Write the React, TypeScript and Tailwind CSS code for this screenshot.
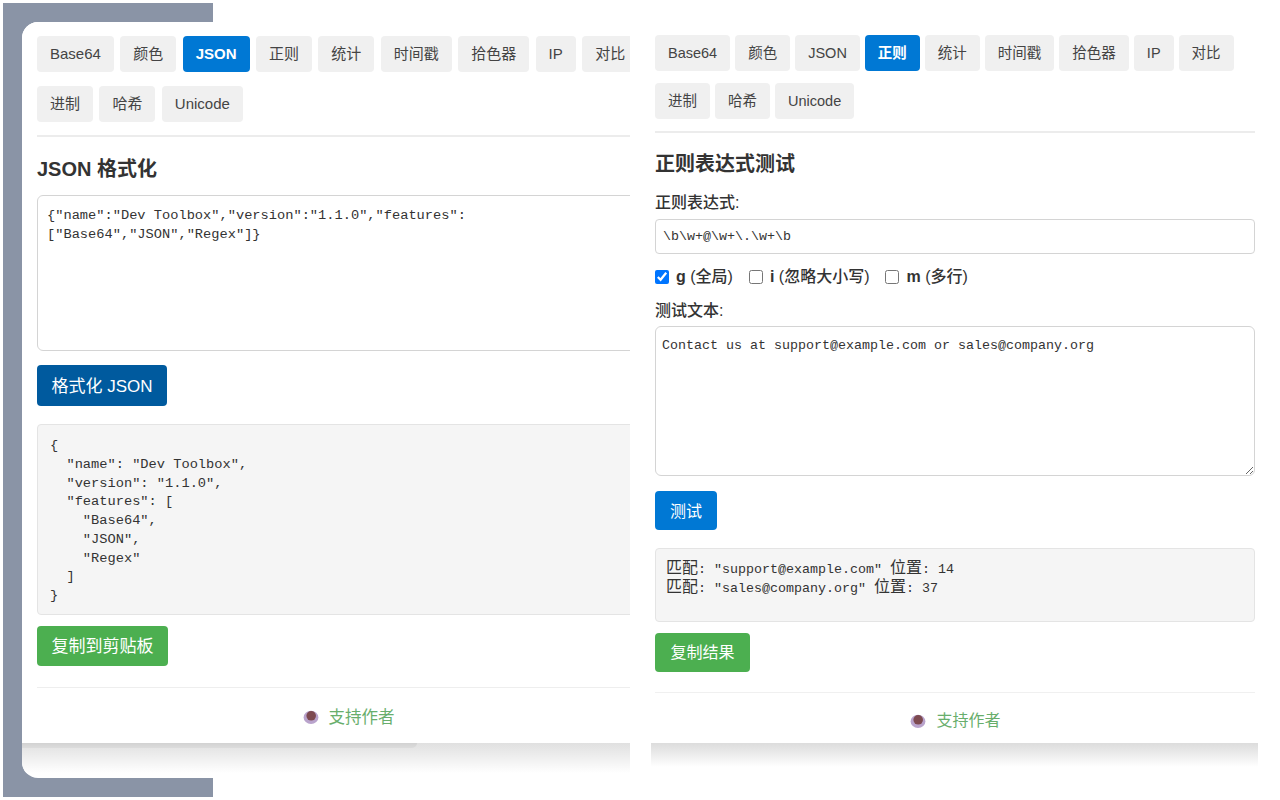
import { useState } from "react";

const TABS = ["Base64", "颜色", "JSON", "正则", "统计", "时间戳", "拾色器", "IP", "对比", "进制", "哈希", "Unicode"];
const SANS = "font-['Liberation_Sans','Noto_Sans_CJK_SC',sans-serif]";
const MONO = "font-['Liberation_Mono','Noto_Sans_CJK_SC',monospace]";

const JSON_INPUT = '{"name":"Dev Toolbox","version":"1.1.0","features":\n["Base64","JSON","Regex"]}';
const JSON_OUTPUT = `{
  "name": "Dev Toolbox",
  "version": "1.1.0",
  "features": [
    "Base64",
    "JSON",
    "Regex"
  ]
}`;

const CoffeeIcon = () => (
  <svg width="16" height="16" viewBox="0 0 16 16" className="shrink-0">
    <ellipse cx="8" cy="8.4" rx="7.4" ry="6.6" fill="#b9a3cc" />
    <circle cx="8.2" cy="6.8" r="4.8" fill="#7d4a50" />
  </svg>
);

const TabBar = ({ active, large }: { active: string; large: boolean }) => (
  <div className={large ? "flex w-[610px] flex-wrap gap-x-[6.4px] gap-y-[14px]" : "flex w-[600px] flex-wrap gap-x-[5px] gap-y-3"}>
    {TABS.map((tab) => (
      <button
        key={tab}
        className={`h-[36px] rounded-[4px] px-[13px] pt-[1px] ${large ? "text-[15px]" : "text-[14.5px]"} ${
          tab === active ? "bg-[#0078d4] font-bold text-white" : "bg-[#f0f0f0] text-[#444]"
        }`}
      >
        {tab}
      </button>
    ))}
  </div>
);

const Support = ({ className }: { className: string }) => (
  <div className={`flex items-center justify-center gap-[10px] text-[#68ae6c] ${className}`}>
    <CoffeeIcon />
    支持作者
  </div>
);

const JsonPanel = () => (
  <div className="relative h-[756px] w-[608px] overflow-hidden rounded-l-[16px] bg-white">
    <div className="h-[721px] bg-white pl-[15px] pt-[14px]">
      <TabBar active="JSON" large />
      <div className="mt-[13px] h-[2px] w-[610px] bg-[#ececec]" />
      <h2 className="mt-[18px] text-[20px] font-bold leading-[28px] text-[#333]">JSON 格式化</h2>
      <textarea
        readOnly
        value={JSON_INPUT}
        className={`mt-[12px] block h-[156px] w-[620px] resize-none rounded-[6px] border border-[#d4d4d4] py-[10px] pl-[9px] pr-[10px] text-[13.7px] leading-[19px] text-[#333] outline-none ${MONO}`}
      />
      <button className="mt-[14px] block h-[41px] w-[130px] rounded-[4px] bg-[#005a9e] pt-[3px] text-[17px] text-white">格式化 JSON</button>
      <pre className={`mt-[18px] h-[191px] w-[620px] rounded-[4px] border border-[#e4e4e4] bg-[#f5f5f5] px-[12px] pt-[12px] text-[13.7px] leading-[18.75px] text-[#333] ${MONO}`}>
        {JSON_OUTPUT}
      </pre>
      <button className="mt-[11px] block h-[40px] w-[131px] rounded-[4px] bg-[#4caf50] pt-[2px] text-[17px] text-white">复制到剪贴板</button>
      <div className="mt-[21px] h-px w-[610px] bg-[#eee]" />
      <Support className="mt-[18px] pl-[30px] text-[16.5px] leading-[22px]" />
    </div>
    <div className="h-[30px] bg-gradient-to-b from-[#e0e0e0] to-white">
      <div className="h-[5px] w-[395px] rounded-br-[16px] bg-gradient-to-b from-[#d2d2d2] to-[#dcdcdc]" />
    </div>
  </div>
);

const RegexPanel = () => {
  const [flags, setFlags] = useState({ g: true, i: false, m: false });
  const options: [keyof typeof flags, string][] = [
    ["g", "(全局)"],
    ["i", "(忽略大小写)"],
    ["m", "(多行)"],
  ];

  return (
    <div className="ml-[21px] w-[607px] pt-[32px]">
      <div className="h-[708px] pl-[4px]">
        <TabBar active="正则" large={false} />
        <div className="mt-[12px] h-[2px] w-[600px] bg-[#ececec]" />
        <h2 className="mt-[17px] text-[20px] font-bold leading-[28px] text-[#333]">正则表达式测试</h2>
        <label className="mt-[13px] block text-[16px] font-medium leading-[24px] text-[#333]">正则表达式:</label>
        <input
          readOnly
          value="\b\w+@\w+\.\w+\b"
          className={`mt-[4px] block h-[35px] w-[600px] rounded-[4px] border border-[#d4d4d4] px-[7px] text-[13.33px] text-[#333] outline-none ${MONO}`}
        />
        <div className="mt-[11px] flex h-[24px] items-center gap-[16px] text-[16px] font-medium text-[#333]">
          {options.map(([key, label]) => (
            <label key={key} className="flex items-center gap-[7px]">
              <input
                type="checkbox"
                checked={flags[key]}
                onChange={() => setFlags((f) => ({ ...f, [key]: !f[key] }))}
                className="m-0 h-[14px] w-[14px] accent-[#0075ff]"
              />
              <span>
                <b>{key}</b> {label}
              </span>
            </label>
          ))}
        </div>
        <label className="mt-[10px] block text-[16px] font-medium leading-[24px] text-[#333]">测试文本:</label>
        <textarea
          readOnly
          value="Contact us at support@example.com or sales@company.org"
          className={`mt-[3px] block h-[150px] w-[600px] rounded-[6px] border border-[#d4d4d4] px-[6px] py-[10px] text-[13.33px] leading-[18px] text-[#333] outline-none ${MONO}`}
        />
        <button className="mt-[15px] block h-[39px] w-[62px] rounded-[4px] bg-[#0078d4] pt-[2px] text-[16px] text-white">测试</button>
        <pre className={`mt-[18px] h-[74px] w-[600px] rounded-[4px] border border-[#e4e4e4] bg-[#f5f5f5] px-[10px] pt-[11px] text-[13.33px] leading-[18px] text-[#333] ${MONO}`}>
          <span className="text-[16px] leading-[18px]">匹配</span>: "support@example.com" <span className="text-[16px] leading-[18px]">位置</span>: 14{"\n"}
          <span className="text-[16px] leading-[18px]">匹配</span>: "sales@company.org" <span className="text-[16px] leading-[18px]">位置</span>: 37
        </pre>
        <button className="mt-[11px] block h-[39px] w-[95px] rounded-[4px] bg-[#4caf50] pt-[1px] text-[16px] text-white">复制结果</button>
        <div className="mt-[20px] h-px w-[600px] bg-[#f0f0f0]" />
        <Support className="mt-[17px] pr-[2px] text-[16px] leading-[21px]" />
      </div>
      <div className="h-[24px] bg-gradient-to-b from-[#dcdcdc] to-white" />
    </div>
  );
};

export default function App() {
  return (
    <div className={`flex h-[800px] w-[1280px] overflow-hidden bg-white p-[3px] ${SANS}`}>
      <div className="h-[794px] w-[627px] shrink-0 bg-[linear-gradient(to_right,#8a94a6_210px,transparent_210px)] pl-[19px] pt-[19px]">
        <JsonPanel />
      </div>
      <RegexPanel />
    </div>
  );
}
